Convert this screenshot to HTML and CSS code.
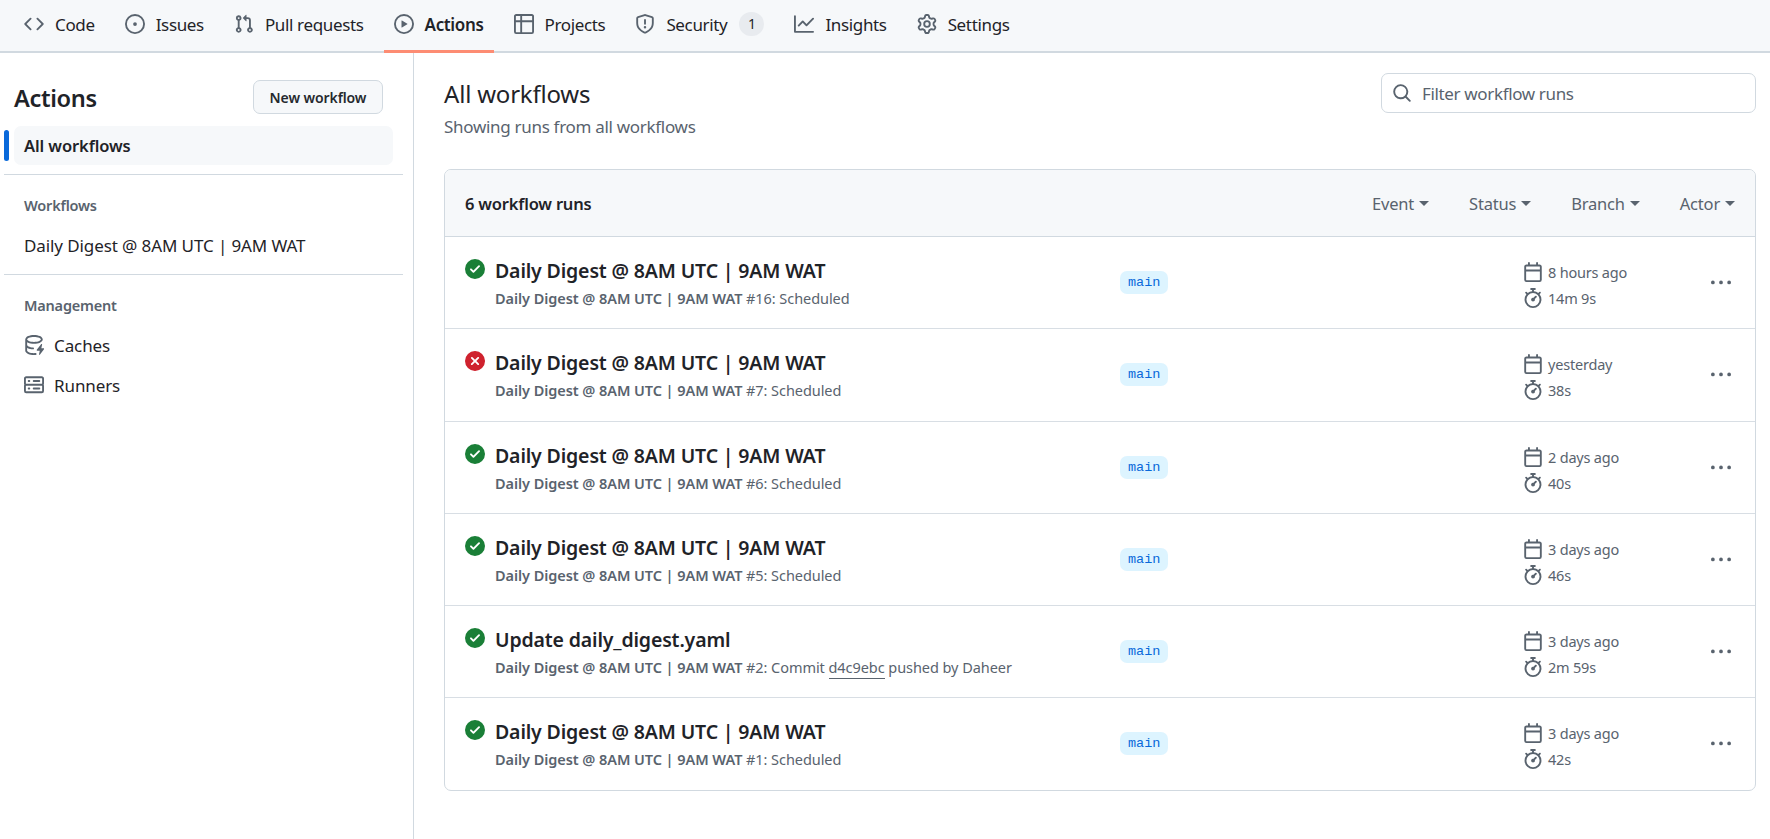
FILE: index.html
```html
<!DOCTYPE html>
<html lang="en">
<head>
<meta charset="utf-8">
<title>Actions</title>
<link rel="stylesheet" href="styles.css">
</head>
<body>
<svg class="sprite" aria-hidden="true">
<symbol id="i-code" viewBox="0 0 16 16"><path d="m11.28 3.22 4.25 4.25a.75.75 0 0 1 0 1.06l-4.25 4.25a.749.749 0 0 1-1.275-.326.749.749 0 0 1 .215-.734L13.94 8l-3.72-3.72a.749.749 0 0 1 .326-1.275.749.749 0 0 1 .734.215Zm-6.56 0a.751.751 0 0 1 1.042.018.751.751 0 0 1 .018 1.042L2.06 8l3.72 3.72a.749.749 0 0 1-.326 1.275.749.749 0 0 1-.734-.215L.47 8.53a.75.75 0 0 1 0-1.06Z"/></symbol>
<symbol id="i-issue" viewBox="0 0 16 16"><path d="M8 9.5a1.5 1.5 0 1 0 0-3 1.5 1.5 0 0 0 0 3Z"/><path d="M8 0a8 8 0 1 1 0 16A8 8 0 0 1 8 0ZM1.5 8a6.5 6.5 0 1 0 13 0 6.5 6.5 0 0 0-13 0Z"/></symbol>
<symbol id="i-pr" viewBox="0 0 16 16"><path d="M1.5 3.25a2.25 2.25 0 1 1 3 2.122v5.256a2.251 2.251 0 1 1-1.5 0V5.372A2.25 2.25 0 0 1 1.5 3.25Zm5.677-.177L9.573.677A.25.25 0 0 1 10 .854V2.5h1A2.5 2.5 0 0 1 13.5 5v5.628a2.251 2.251 0 1 1-1.5 0V5a1 1 0 0 0-1-1h-1v1.646a.25.25 0 0 1-.427.177L7.177 3.427a.25.25 0 0 1 0-.354ZM3.75 2.5a.75.75 0 1 0 0 1.5.75.75 0 0 0 0-1.5Zm0 9.5a.75.75 0 1 0 0 1.5.75.75 0 0 0 0-1.5Zm8.25.75a.75.75 0 1 0 1.5 0 .75.75 0 0 0-1.5 0Z"/></symbol>
<symbol id="i-play" viewBox="0 0 16 16"><path d="M8 0a8 8 0 1 1 0 16A8 8 0 0 1 8 0ZM1.5 8a6.5 6.5 0 1 0 13 0 6.5 6.5 0 0 0-13 0Zm4.879-2.773 4.264 2.559a.25.25 0 0 1 0 .428l-4.264 2.559A.25.25 0 0 1 6 10.559V5.442a.25.25 0 0 1 .379-.215Z"/></symbol>
<symbol id="i-table" viewBox="0 0 16 16"><path d="M0 1.75C0 .784.784 0 1.75 0h12.5C15.216 0 16 .784 16 1.75v12.5A1.75 1.75 0 0 1 14.25 16H1.75A1.75 1.75 0 0 1 0 14.25ZM6.5 6.5v8h7.75a.25.25 0 0 0 .25-.25V6.5Zm8-1.5V1.75a.25.25 0 0 0-.25-.25H6.5V5Zm-13 1.5v7.75c0 .138.112.25.25.25H5v-8ZM5 5V1.5H1.75a.25.25 0 0 0-.25.25V5Z"/></symbol>
<symbol id="i-shield" viewBox="0 0 16 16"><path d="M7.467.133a1.748 1.748 0 0 1 1.066 0l5.25 1.68A1.75 1.75 0 0 1 15 3.48V7c0 1.566-.32 3.182-1.303 4.682-.983 1.498-2.585 2.813-5.032 3.855a1.697 1.697 0 0 1-1.33 0c-2.447-1.042-4.049-2.357-5.032-3.855C1.32 10.182 1 8.566 1 7V3.48a1.75 1.75 0 0 1 1.217-1.667Zm.61 1.429a.25.25 0 0 0-.153 0l-5.25 1.68a.25.25 0 0 0-.174.238V7c0 1.358.275 2.666 1.057 3.86.784 1.194 2.121 2.34 4.366 3.297a.196.196 0 0 0 .154 0c2.245-.956 3.582-2.104 4.366-3.298C13.225 9.666 13.5 8.36 13.5 7V3.48a.251.251 0 0 0-.174-.237l-5.25-1.68ZM8.75 4.75v3a.75.75 0 0 1-1.5 0v-3a.75.75 0 0 1 1.5 0ZM9 10.5a1 1 0 1 1-2 0 1 1 0 0 1 2 0Z"/></symbol>
<symbol id="i-graph" viewBox="0 0 16 16"><path d="M1.5 1.75V13.5h13.75a.75.75 0 0 1 0 1.5H.75a.75.75 0 0 1-.75-.75V1.75a.75.75 0 0 1 1.5 0Zm14.28 2.53-5.25 5.25a.75.75 0 0 1-1.06 0L7 7.06 4.28 9.78a.751.751 0 0 1-1.042-.018.751.751 0 0 1-.018-1.042l3.25-3.25a.75.75 0 0 1 1.06 0L10 7.94l4.72-4.72a.751.751 0 0 1 1.042.018.751.751 0 0 1 .018 1.042Z"/></symbol>
<symbol id="i-gear" viewBox="0 0 16 16"><path d="M8 0a8.2 8.2 0 0 1 .701.031C9.444.095 9.99.645 10.16 1.29l.288 1.107c.018.066.079.158.212.224.231.114.454.243.668.386.123.082.233.09.299.071l1.103-.303c.644-.176 1.392.021 1.82.63.27.385.506.792.704 1.218.315.675.111 1.422-.364 1.891l-.814.806c-.049.048-.098.147-.088.294.016.257.016.515 0 .772-.01.147.038.246.088.294l.814.806c.475.469.679 1.216.364 1.891a7.977 7.977 0 0 1-.704 1.217c-.428.61-1.176.807-1.82.63l-1.102-.302c-.067-.019-.177-.011-.3.071a5.909 5.909 0 0 1-.668.386c-.133.066-.194.158-.211.224l-.29 1.106c-.168.646-.715 1.196-1.458 1.26a8.006 8.006 0 0 1-1.402 0c-.743-.064-1.289-.614-1.458-1.26l-.289-1.106c-.018-.066-.079-.158-.212-.224a5.738 5.738 0 0 1-.668-.386c-.123-.082-.233-.09-.299-.071l-1.103.303c-.644.176-1.392-.021-1.82-.63a8.12 8.12 0 0 1-.704-1.218c-.315-.675-.111-1.422.363-1.891l.815-.806c.05-.048.098-.147.088-.294a6.214 6.214 0 0 1 0-.772c.01-.147-.038-.246-.088-.294l-.815-.806C.635 6.045.431 5.298.746 4.623a7.92 7.92 0 0 1 .704-1.217c.428-.61 1.176-.807 1.82-.63l1.102.302c.067.019.177.011.3-.071.214-.143.437-.272.668-.386.133-.066.194-.158.211-.224l.29-1.106C6.009.645 6.556.095 7.299.03 7.53.01 7.764 0 8 0Zm-.571 1.525c-.036.003-.108.036-.137.146l-.289 1.105c-.147.561-.549.967-.998 1.189-.173.086-.34.183-.5.29-.417.278-.97.423-1.529.27l-1.103-.303c-.109-.03-.175.016-.195.045-.22.312-.412.644-.573.99-.014.031-.021.11.059.19l.815.806c.411.406.562.957.53 1.456a4.709 4.709 0 0 0 0 .582c.032.499-.119 1.05-.53 1.456l-.815.806c-.081.08-.073.159-.059.19.162.346.353.677.573.989.02.03.085.076.195.046l1.102-.303c.56-.153 1.113-.008 1.53.27.161.107.328.204.501.29.447.222.85.629.997 1.189l.289 1.105c.029.109.101.143.137.146a6.6 6.6 0 0 0 1.142 0c.036-.003.108-.036.137-.146l.289-1.105c.147-.561.549-.967.998-1.189.173-.086.34-.183.5-.29.417-.278.97-.423 1.529-.27l1.103.303c.109.029.175-.016.195-.045.22-.313.411-.644.573-.99.014-.031.021-.11-.059-.19l-.815-.806c-.411-.406-.562-.957-.53-1.456a4.709 4.709 0 0 0 0-.582c-.032-.499.119-1.05.53-1.456l.815-.806c.081-.08.073-.159.059-.19a6.464 6.464 0 0 0-.573-.989c-.02-.03-.085-.076-.195-.046l-1.102.303c-.56.153-1.113.008-1.53-.27a4.44 4.44 0 0 0-.501-.29c-.447-.222-.85-.629-.997-1.189l-.289-1.105c-.029-.11-.101-.143-.137-.146a6.6 6.6 0 0 0-1.142 0ZM11 8a3 3 0 1 1-6 0 3 3 0 0 1 6 0ZM9.5 8a1.5 1.5 0 1 0-3.001.001A1.5 1.5 0 0 0 9.5 8Z"/></symbol>
<symbol id="i-search" viewBox="0 0 16 16"><path d="M10.68 11.74a6 6 0 0 1-7.922-8.982 6 6 0 0 1 8.982 7.922l3.04 3.04a.749.749 0 0 1-.326 1.275.749.749 0 0 1-.734-.215ZM11.5 7a4.499 4.499 0 1 0-8.997 0A4.499 4.499 0 0 0 11.5 7Z"/></symbol>
<symbol id="i-cal" viewBox="0 0 16 16"><path d="M4.75 0a.75.75 0 0 1 .75.75V2h5V.75a.75.75 0 0 1 1.5 0V2h1.25c.966 0 1.75.784 1.75 1.75v10.5A1.75 1.75 0 0 1 13.25 16H2.75A1.75 1.75 0 0 1 1 14.25V3.75C1 2.784 1.784 2 2.75 2H4V.75A.75.75 0 0 1 4.75 0ZM2.5 7.5v6.75c0 .138.112.25.25.25h10.5a.25.25 0 0 0 .25-.25V7.5Zm10.75-4H2.75a.25.25 0 0 0-.25.25V6h11V3.75a.25.25 0 0 0-.25-.25Z"/></symbol>
<symbol id="i-watch" viewBox="0 0 16 16"><path d="M5.75.75A.75.75 0 0 1 6.5 0h3a.75.75 0 0 1 0 1.5h-.75v1l-.001.041a6.724 6.724 0 0 1 3.464 1.435l.007-.006.75-.75a.749.749 0 0 1 1.275.326.749.749 0 0 1-.215.734l-.75.75-.006.007a6.75 6.75 0 1 1-10.548 0L2.72 5.03l-.75-.75a.751.751 0 0 1 .018-1.042.751.751 0 0 1 1.042-.018l.75.75.007.006A6.72 6.72 0 0 1 7.25 2.541V1.5H6.5a.75.75 0 0 1-.75-.75ZM8 14.5a5.25 5.25 0 1 0-.001-10.501A5.25 5.25 0 0 0 8 14.5Zm.389-6.7 1.33-1.33a.75.75 0 1 1 1.061 1.06L9.45 8.861A1.503 1.503 0 0 1 8 10.75a1.499 1.499 0 1 1 .389-2.95Z"/></symbol>
<symbol id="i-kebab" viewBox="0 0 16 16"><path d="M8 9a1.5 1.5 0 1 0 0-3 1.5 1.5 0 0 0 0 3ZM1.5 9a1.5 1.5 0 1 0 0-3 1.5 1.5 0 0 0 0 3Zm13 0a1.5 1.5 0 1 0 0-3 1.5 1.5 0 0 0 0 3Z"/></symbol>
<symbol id="i-ok" viewBox="0 0 16 16"><path d="M8 16A8 8 0 1 1 8 0a8 8 0 0 1 0 16Zm3.78-9.72a.751.751 0 0 0-.018-1.042.751.751 0 0 0-1.042-.018L6.75 9.19 5.28 7.72a.751.751 0 0 0-1.042.018.751.751 0 0 0-.018 1.042l2 2a.75.75 0 0 0 1.06 0Z"/></symbol>
<symbol id="i-fail" viewBox="0 0 16 16"><path d="M2.343 13.657A8 8 0 1 1 13.658 2.343 8 8 0 0 1 2.343 13.657ZM6.03 4.97a.751.751 0 0 0-1.042.018.751.751 0 0 0-.018 1.042L6.94 8 4.97 9.97a.749.749 0 0 0 .326 1.275.749.749 0 0 0 .734-.215L8 9.06l1.97 1.97a.749.749 0 0 0 1.275-.326.749.749 0 0 0-.215-.734L9.06 8l1.97-1.97a.749.749 0 0 0-.326-1.275.749.749 0 0 0-.734.215L8 6.94Z"/></symbol>
<symbol id="i-cache" viewBox="0 0 16 16"><path d="M2.5 5.724V8c0 .248.238.7 1.169 1.159.874.43 2.144.745 3.62.822a.75.75 0 1 1-.078 1.498c-1.622-.085-3.102-.432-4.204-.975a5.565 5.565 0 0 1-.507-.28V12.5c0 .133.058.318.282.551.227.237.591.483 1.101.707 1.015.447 2.47.742 4.117.742.406 0 .802-.018 1.183-.052a.751.751 0 1 1 .134 1.494C8.89 15.98 8.45 16 8 16c-1.805 0-3.475-.32-4.721-.869-.623-.274-1.173-.619-1.579-1.041-.408-.425-.7-.964-.7-1.59v-9c0-.626.292-1.165.7-1.591.406-.42.956-.766 1.579-1.04C4.525.32 6.195 0 8 0c1.806 0 3.476.32 4.721.869.623.274 1.173.619 1.579 1.041.408.425.7.964.7 1.59 0 .626-.292 1.165-.7 1.591-.406.42-.956.766-1.578 1.04C11.476 6.68 9.806 7 8 7c-1.805 0-3.475-.32-4.721-.869a6.15 6.15 0 0 1-.779-.407Zm0-2.224c0 .133.058.318.282.551.227.237.591.483 1.101.707C4.898 5.205 6.353 5.5 8 5.5c1.646 0 3.101-.295 4.118-.742.508-.224.873-.471 1.1-.708.224-.232.282-.417.282-.55 0-.133-.058-.318-.282-.551-.227-.237-.591-.483-1.101-.707C11.102 1.795 9.647 1.5 8 1.5c-1.646 0-3.101.295-4.118.742-.508.224-.873.471-1.1.708-.224.232-.282.417-.282.55Z"/><path d="M14.49 7.582a.375.375 0 0 0-.66-.313l-3.625 4.625a.375.375 0 0 0 .295.606h2.127l-.619 2.922a.375.375 0 0 0 .66.313l3.625-4.625a.375.375 0 0 0-.295-.606h-2.127Z"/></symbol>
<symbol id="i-server" viewBox="0 0 16 16"><path d="M1.75 1h12.5c.966 0 1.75.784 1.75 1.75v4c0 .372-.116.717-.314 1 .198.283.314.628.314 1v4a1.75 1.75 0 0 1-1.75 1.75H1.75A1.75 1.75 0 0 1 0 12.75v-4c0-.372.116-.717.314-1a1.739 1.739 0 0 1-.314-1v-4C0 1.784.784 1 1.75 1ZM1.5 2.75v4c0 .138.112.25.25.25h12.5a.25.25 0 0 0 .25-.25v-4a.25.25 0 0 0-.25-.25H1.75a.25.25 0 0 0-.25.25Zm.25 5.75a.25.25 0 0 0-.25.25v4c0 .138.112.25.25.25h12.5a.25.25 0 0 0 .25-.25v-4a.25.25 0 0 0-.25-.25ZM7 4.75A.75.75 0 0 1 7.75 4h4.5a.75.75 0 0 1 0 1.5h-4.5A.75.75 0 0 1 7 4.75ZM7.75 10h4.5a.75.75 0 0 1 0 1.5h-4.5a.75.75 0 0 1 0-1.5ZM3 4.75A.75.75 0 0 1 3.75 4h.5a.75.75 0 0 1 0 1.5h-.5A.75.75 0 0 1 3 4.75ZM3.75 10h.5a.75.75 0 0 1 0 1.5h-.5a.75.75 0 0 1 0-1.5Z"/></symbol>
</svg>

<nav class="tabs">
  <a class="tab"><svg class="ico"><use href="#i-code"/></svg><span>Code</span></a>
  <a class="tab"><svg class="ico"><use href="#i-issue"/></svg><span>Issues</span></a>
  <a class="tab"><svg class="ico"><use href="#i-pr"/></svg><span>Pull requests</span></a>
  <a class="tab active"><svg class="ico"><use href="#i-play"/></svg><span>Actions</span></a>
  <a class="tab"><svg class="ico"><use href="#i-table"/></svg><span>Projects</span></a>
  <a class="tab"><svg class="ico"><use href="#i-shield"/></svg><span>Security</span><span class="count">1</span></a>
  <a class="tab"><svg class="ico"><use href="#i-graph"/></svg><span>Insights</span></a>
  <a class="tab"><svg class="ico"><use href="#i-gear"/></svg><span>Settings</span></a>
</nav>

<div class="layout">
  <aside class="side">
    <div class="side-head">
      <h2 class="side-title">Actions</h2>
      <button class="btn">New workflow</button>
    </div>
    <div class="side-item selected">All workflows</div>
    <hr class="rule">
    <div class="side-label">Workflows</div>
    <div class="side-link first">Daily Digest @ 8AM UTC | 9AM WAT</div>
    <hr class="rule">
    <div class="side-label">Management</div>
    <div class="side-link first"><svg class="ico"><use href="#i-cache"/></svg>Caches</div>
    <div class="side-link"><svg class="ico"><use href="#i-server"/></svg>Runners</div>
  </aside>

  <main class="main">
    <header class="page-head">
      <div>
        <h1 class="page-title">All workflows</h1>
        <p class="page-sub">Showing runs from all workflows</p>
      </div>
      <label class="filter"><svg class="ico"><use href="#i-search"/></svg><span>Filter workflow runs</span></label>
    </header>

    <section class="box">
      <div class="box-head">
        <strong class="box-count">6 workflow runs</strong>
        <div class="menus">
          <span class="menu">Event<i class="caret"></i></span>
          <span class="menu">Status<i class="caret"></i></span>
          <span class="menu">Branch<i class="caret"></i></span>
          <span class="menu">Actor<i class="caret"></i></span>
        </div>
      </div>

      <article class="run">
        <svg class="ico status ok"><use href="#i-ok"/></svg>
        <div class="run-text"><div class="run-title">Daily Digest @ 8AM UTC | 9AM WAT</div><div class="run-meta"><b>Daily Digest @ 8AM UTC | 9AM WAT</b> #16: Scheduled</div></div>
        <div><span class="branch">main</span></div>
        <div class="times"><div class="time"><svg class="ico"><use href="#i-cal"/></svg>8 hours ago</div><div class="time"><svg class="ico"><use href="#i-watch"/></svg>14m 9s</div></div>
        <svg class="ico kebab"><use href="#i-kebab"/></svg>
      </article>
      <article class="run">
        <svg class="ico status fail"><use href="#i-fail"/></svg>
        <div class="run-text"><div class="run-title">Daily Digest @ 8AM UTC | 9AM WAT</div><div class="run-meta"><b>Daily Digest @ 8AM UTC | 9AM WAT</b> #7: Scheduled</div></div>
        <div><span class="branch">main</span></div>
        <div class="times"><div class="time"><svg class="ico"><use href="#i-cal"/></svg>yesterday</div><div class="time"><svg class="ico"><use href="#i-watch"/></svg>38s</div></div>
        <svg class="ico kebab"><use href="#i-kebab"/></svg>
      </article>
      <article class="run">
        <svg class="ico status ok"><use href="#i-ok"/></svg>
        <div class="run-text"><div class="run-title">Daily Digest @ 8AM UTC | 9AM WAT</div><div class="run-meta"><b>Daily Digest @ 8AM UTC | 9AM WAT</b> #6: Scheduled</div></div>
        <div><span class="branch">main</span></div>
        <div class="times"><div class="time"><svg class="ico"><use href="#i-cal"/></svg>2 days ago</div><div class="time"><svg class="ico"><use href="#i-watch"/></svg>40s</div></div>
        <svg class="ico kebab"><use href="#i-kebab"/></svg>
      </article>
      <article class="run">
        <svg class="ico status ok"><use href="#i-ok"/></svg>
        <div class="run-text"><div class="run-title">Daily Digest @ 8AM UTC | 9AM WAT</div><div class="run-meta"><b>Daily Digest @ 8AM UTC | 9AM WAT</b> #5: Scheduled</div></div>
        <div><span class="branch">main</span></div>
        <div class="times"><div class="time"><svg class="ico"><use href="#i-cal"/></svg>3 days ago</div><div class="time"><svg class="ico"><use href="#i-watch"/></svg>46s</div></div>
        <svg class="ico kebab"><use href="#i-kebab"/></svg>
      </article>
      <article class="run">
        <svg class="ico status ok"><use href="#i-ok"/></svg>
        <div class="run-text"><div class="run-title">Update daily_digest.yaml</div><div class="run-meta"><b>Daily Digest @ 8AM UTC | 9AM WAT</b> #2: Commit <a class="sha">d4c9ebc</a> pushed by Daheer</div></div>
        <div><span class="branch">main</span></div>
        <div class="times"><div class="time"><svg class="ico"><use href="#i-cal"/></svg>3 days ago</div><div class="time"><svg class="ico"><use href="#i-watch"/></svg>2m 59s</div></div>
        <svg class="ico kebab"><use href="#i-kebab"/></svg>
      </article>
      <article class="run">
        <svg class="ico status ok"><use href="#i-ok"/></svg>
        <div class="run-text"><div class="run-title">Daily Digest @ 8AM UTC | 9AM WAT</div><div class="run-meta"><b>Daily Digest @ 8AM UTC | 9AM WAT</b> #1: Scheduled</div></div>
        <div><span class="branch">main</span></div>
        <div class="times"><div class="time"><svg class="ico"><use href="#i-cal"/></svg>3 days ago</div><div class="time"><svg class="ico"><use href="#i-watch"/></svg>42s</div></div>
        <svg class="ico kebab"><use href="#i-kebab"/></svg>
      </article>
    </section>
  </main>
</div>
</body>
</html>
```

FILE: styles.css
```css
* { box-sizing: border-box; }
html, body { height: 100%; }
body {
  margin: 0;
  background: #fff;
  color: #1f2328;
  font-family: "Noto Sans", "Open Sans", sans-serif;
  font-size: 17px;
  letter-spacing: -0.3px;
  overflow: hidden;
}
.sprite { display: none; }
.ico { width: 20px; height: 20px; fill: #59636e; flex: none; display: block; }

.tabs {
  display: flex;
  height: 53px;
  padding-left: 14px;
  gap: 10px;
  background: #f6f8fa;
  border-bottom: 2px solid #d1d9e0;
}
.tab {
  display: flex;
  align-items: center;
  gap: 11px;
  height: 53px;
  padding: 0 10px 5px;
  letter-spacing: -0.35px;
  flex: none;
}
.tab.active { font-weight: 600; border-bottom: 3px solid #fd8c73; padding-bottom: 2px; }
.count {
  background: #e8ebef;
  border-radius: 12px;
  min-width: 25px;
  height: 24px;
  line-height: 24px;
  text-align: center;
  font-size: 14px;
  margin-left: 1px;
}

.layout { display: flex; height: 786px; }

.side {
  width: 414px;
  flex: none;
  border-right: 1px solid #d1d9e0;
  padding: 27px 10px 0 4px;
}
.side-head { display: flex; justify-content: space-between; align-items: center; padding: 0 20px 0 10px; height: 34px; }
.side-title { margin: 2px 0 0; font-size: 23.6px; font-weight: 600; letter-spacing: -0.35px; }
.btn {
  width: 130px;
  height: 34px;
  background: #f6f8fa;
  border: 1px solid #d1d9e0;
  border-radius: 7px;
  color: #25292e;
  font: 600 14px "Noto Sans", sans-serif;
  letter-spacing: -0.1px;
  padding: 0;
}
.side-item.selected {
  position: relative;
  margin: 12px 0 0 10px;
  width: 379px;
  height: 39px;
  line-height: 39px;
  padding-left: 10px;
  background: #f6f8fa;
  border-radius: 7px;
  font-size: 16.5px;
  font-weight: 600;
  letter-spacing: -0.1px;
}
.side-item.selected::before {
  content: "";
  position: absolute;
  left: -10px;
  top: 4px;
  width: 5px;
  height: 31px;
  border-radius: 3px;
  background: #0969da;
}
.rule { border: 0; border-top: 1px solid #d1d9e0; margin: 9px 0 0; }
.side-label { margin: 20px 0 0 20px; font-size: 14.5px; line-height: 20px; font-weight: 600; color: #59636e; letter-spacing: -0.2px; }
.side-link { display: flex; align-items: center; gap: 10px; height: 40px; padding-left: 20px; letter-spacing: -0.1px; }
.side-link.first { margin-top: 10px; }

.main { flex: 1; padding: 20px 14px 0 30px; min-width: 0; }
.page-head { display: flex; justify-content: space-between; align-items: flex-start; height: 96px; }
.page-title { margin: 4px 0 0; font-size: 24px; line-height: 34px; font-weight: 400; letter-spacing: -0.2px; }
.page-sub { margin: 4px 0 0; line-height: 24px; color: #59636e; }
.filter {
  display: flex;
  align-items: center;
  gap: 10px;
  width: 375px;
  height: 40px;
  padding-left: 10px;
  border: 1px solid #d1d9e0;
  border-radius: 7px;
  color: #59636e;
  letter-spacing: -0.35px;
}

.box { border: 1px solid #d1d9e0; border-radius: 7px; overflow: hidden; }
.box-head {
  display: flex;
  justify-content: space-between;
  align-items: center;
  height: 67px;
  padding: 0 20px;
  background: #f6f8fa;
  border-bottom: 1px solid #d1d9e0;
}
.box-count { font-size: 16.5px; font-weight: 600; letter-spacing: -0.2px; }
.menus { display: flex; gap: 40px; }
.menu { display: flex; align-items: center; gap: 5px; font-size: 16.5px; color: #59636e; letter-spacing: -0.2px; }
.caret { width: 0; height: 0; border: 5px solid transparent; border-top-color: #59636e; border-bottom: 0; }

.run {
  display: grid;
  grid-template-columns: 30px 625px 403px 1fr 20px;
  height: 92.3px;
  padding: 22px 24px 0 20px;
  border-top: 1px solid #d8dee4;
}
.box-head + .run { border-top: 0; height: 91.3px; }
.status { width: 20px; height: 20px; }
.ok { fill: #1a7f37; }
.fail { fill: #cf222e; }
.run-title { font-size: 19.5px; font-weight: 600; line-height: 24px; letter-spacing: -0.15px; }
.run-meta { margin-top: 5px; font-size: 14.5px; line-height: 20px; color: #59636e; letter-spacing: -0.06px; }
.run-meta b { font-weight: 600; }
.sha { border-bottom: 1px solid #59636e; padding-bottom: 1px; }
.branch {
  display: inline-block;
  margin-top: 12px;
  height: 23px;
  line-height: 23px;
  padding: 0 8px;
  border-radius: 7px;
  background: #ddf4ff;
  color: #0969da;
  font-family: "Liberation Mono", monospace;
  font-size: 13.5px;
  letter-spacing: 0;
}
.times { font-size: 14.5px; color: #59636e; letter-spacing: -0.2px; }
.time { display: flex; align-items: center; gap: 5px; height: 26px; }
.kebab { margin-top: 14px; }
```
